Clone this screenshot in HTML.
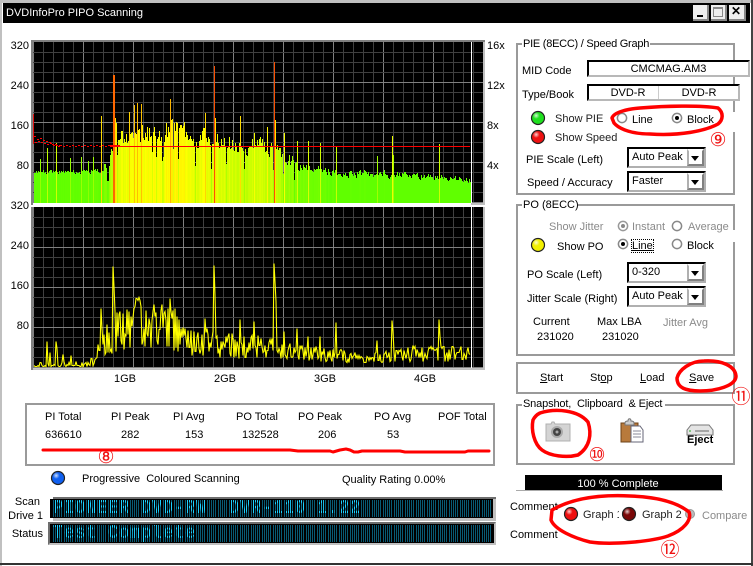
<!DOCTYPE html>
<html><head><meta charset="utf-8"><style>
html,body{margin:0;padding:0;background:#fff}
#w{position:relative;width:753px;height:566px;overflow:hidden;background:#fff;font-family:"Liberation Sans","Noto Sans CJK JP",sans-serif;font-size:11px;color:#000}
.t{position:absolute;white-space:pre;line-height:13px;transform:translateY(-5px)}
.c{transform:translate(-50%,-5px)}
.r{transform:translate(-100%,-5px)}
.g{color:#8a8a8a}
.b{position:absolute;box-sizing:border-box}
.grp{border:2px solid #9a9a9a}
.fld{position:absolute;box-sizing:border-box;background:#fff;border:2px solid;border-color:#000 #b8b8b8 #b8b8b8 #000;text-align:center;line-height:14px}
.sel{position:absolute;box-sizing:border-box;background:#fff;border:2px solid;border-color:#000 #b0b0b0 #b0b0b0 #000;line-height:17px;padding-left:3px;font-size:11px}
.sel i{position:absolute;right:0;top:0;bottom:0;width:17px;background:#fff;border:2px solid;border-color:#fff #808080 #808080 #b0b0b0;box-sizing:border-box}
.sel i:after{content:"";position:absolute;left:2px;top:5px;border:4px solid transparent;border-top:5px solid #000;border-bottom:0}
.lcdbg{position:absolute;box-sizing:border-box;background:#000}
.d{position:absolute;overflow:hidden;background:repeating-linear-gradient(90deg,#085a74 0 1px,#000 1px 2px,#085a74 2px 3px,#000 3px 4px,#085a74 4px 5px,#000 5px 6px,#085a74 6px 7px,#000 7px 8px,#085a74 8px 9px,#000 9px 11px)}
.d .x{position:absolute;left:0;top:-1px;font:bold 17px/17px "Liberation Mono",monospace;letter-spacing:.8px;color:#1cd0ff;white-space:pre;transform:scaleY(1.15);transform-origin:0 0}
.d .o{position:absolute;inset:0;background:repeating-linear-gradient(90deg,#0000 0 1px,#000 1px 2px,#0000 2px 3px,#000 3px 4px,#0000 4px 5px,#000 5px 6px,#0000 6px 7px,#000 7px 8px,#0000 8px 9px,#000 9px 11px)}
.num{position:absolute;color:#f01010;font-size:19px;line-height:20px;transform:translate(-50%,-10px);font-family:"DejaVu Sans","Noto Sans CJK JP",sans-serif}
u{text-decoration:underline}
svg{position:absolute;left:0;top:0}
</style></head><body><div id="w">
<div class="b" style="left:0;top:0;width:753px;height:3px;background:#c0c0c0"></div>
<div class="b" style="left:0;top:0;width:2px;height:566px;background:#c0c0c0"></div>
<div class="b" style="left:751px;top:0;width:2px;height:566px;background:#444"></div>
<div class="b" style="left:0;top:563px;width:753px;height:2px;background:#333"></div>
<div class="b" style="left:3px;top:3px;width:747px;height:20px;background:#000"></div>
<div class="t" style="left:6px;top:12px;color:#fff;font-size:11px">DVDInfoPro PIPO Scanning</div>
<div class="b" style="left:693px;top:5px;width:16px;height:16px;background:#eee;border-right:2px solid #888;border-bottom:2px solid #888"><div class="b" style="left:4px;top:10px;width:6px;height:2px;background:#000"></div></div>
<div class="b" style="left:711px;top:5px;width:16px;height:16px;background:#eee;border-right:2px solid #888;border-bottom:2px solid #888"><div class="b" style="left:2px;top:2px;width:10px;height:10px;border:1px solid #888;border-top-width:2px"></div></div>
<div class="b" style="left:729px;top:5px;width:17px;height:16px;background:#eee;border-right:2px solid #888;border-bottom:2px solid #888"><div class="t" style="left:2px;top:5px;font-weight:bold;font-size:12px">✕</div></div>

<svg id="ch" width="753" height="566" shape-rendering="crispEdges"></svg>

<div class="t r" style="left:29px;top:45px">320</div><div class="t r" style="left:29px;top:85px">240</div><div class="t r" style="left:29px;top:125px">160</div><div class="t r" style="left:29px;top:165px">80</div><div class="t r" style="left:29px;top:205px">320</div>
<div class="t r" style="left:29px;top:245px">240</div><div class="t r" style="left:29px;top:285px">160</div><div class="t r" style="left:29px;top:325px">80</div>
<div class="t" style="left:487px;top:45px">16x</div><div class="t" style="left:487px;top:85px">12x</div><div class="t" style="left:487px;top:125px">8x</div><div class="t" style="left:487px;top:165px">4x</div>
<div class="t c" style="left:125px;top:378px">1GB</div><div class="t c" style="left:225px;top:378px">2GB</div><div class="t c" style="left:325px;top:378px">3GB</div><div class="t c" style="left:425px;top:378px">4GB</div>

<div class="b" style="left:25px;top:403px;width:470px;height:63px;border:2px solid #9a9a9a"></div>
<div class="t" style="left:45px;top:416px">PI Total</div><div class="t" style="left:111px;top:416px">PI Peak</div><div class="t" style="left:173px;top:416px">PI Avg</div><div class="t" style="left:236px;top:416px">PO Total</div><div class="t" style="left:298px;top:416px">PO Peak</div><div class="t" style="left:374px;top:416px">PO Avg</div><div class="t" style="left:438px;top:416px">POF Total</div>
<div class="t" style="left:45px;top:434px">636610</div><div class="t" style="left:121px;top:434px">282</div><div class="t" style="left:185px;top:434px">153</div><div class="t" style="left:242px;top:434px">132528</div><div class="t" style="left:318px;top:434px">206</div><div class="t" style="left:387px;top:434px">53</div>
<div class="num" style="left:106px;top:457px">⑧</div>
<div class="t" style="left:82px;top:478px">Progressive  Coloured Scanning</div><div class="t" style="left:342px;top:479px">Quality Rating 0.00%</div>
<div class="t r" style="left:40px;top:501px">Scan</div><div class="t r" style="left:43px;top:515px">Drive 1</div><div class="t r" style="left:43px;top:533px">Status</div>

<div class="b" style="left:53px;top:497px;width:443px;height:24px;background:#c0c0c0;border-top:2px solid #6e6e6e"></div>
<div class="lcdbg" style="left:50px;top:499px;width:443px;height:19px"></div>
<div class="d" style="left:53px;top:500px;width:438px;height:17px"><div class="x">PIONEER DVD-RW  DVR-110 1.22</div><div class="o"></div></div>
<div class="lcdbg" style="left:48px;top:522px;width:448px;height:23px;border:2px solid;border-color:#6e6e6e #c0c0c0 #c0c0c0 #6e6e6e"></div>
<div class="d" style="left:53px;top:525px;width:438px;height:17px"><div class="x">Test Complete</div><div class="o"></div></div>

<div class="b grp" style="left:516px;top:43px;width:219px;height:152px"></div>
<div class="b" style="left:522px;top:38px;width:128px;height:10px;background:#fff"></div>
<div class="t" style="left:523px;top:43px;letter-spacing:-.25px">PIE (8ECC) / Speed Graph</div>
<div class="t" style="left:522px;top:70px">MID Code</div><div class="fld" style="left:587px;top:60px;width:163px;height:17px">CMCMAG.AM3</div>
<div class="t" style="left:522px;top:94px">Type/Book</div><div class="fld" style="left:587px;top:84px;width:153px;height:17px"></div><div class="t c" style="left:628px;top:92px">DVD-R</div><div class="t c" style="left:699px;top:92px">DVD-R</div>
<div class="b" style="left:658px;top:86px;width:1px;height:13px;background:#ccc"></div>
<div class="b" style="left:730px;top:112px;width:6px;height:20px;background:#fff"></div>
<div class="t" style="left:555px;top:118px;color:#222">Show PIE</div><div class="t" style="left:555px;top:137px;color:#222">Show Speed</div>
<div class="t" style="left:632px;top:119px">Line</div><div class="t" style="left:687px;top:119px">Block</div>
<div class="num" style="left:718px;top:140px">⑨</div>
<div class="t" style="left:526px;top:159px">PIE Scale (Left)</div><div class="sel" style="left:627px;top:147px;width:79px;height:21px">Auto Peak<i></i></div>
<div class="t" style="left:527px;top:182px">Speed / Accuracy</div><div class="sel" style="left:627px;top:171px;width:79px;height:21px">Faster<i></i></div>

<div class="b grp" style="left:516px;top:204px;width:219px;height:152px"></div>
<div class="b" style="left:522px;top:199px;width:56px;height:10px;background:#fff"></div>
<div class="t" style="left:523px;top:204px">PO (8ECC)</div>
<div class="b" style="left:730px;top:230px;width:6px;height:12px;background:#fff"></div>
<div class="t g" style="left:549px;top:226px">Show Jitter</div><div class="t g" style="left:632px;top:226px">Instant</div><div class="t g" style="left:688px;top:226px">Average</div>
<div class="t" style="left:557px;top:246px">Show PO</div><div class="t" style="left:632px;top:245px;outline:1px dotted #000;line-height:12px"><u>Line</u></div><div class="t" style="left:687px;top:245px">Block</div>
<div class="t" style="left:527px;top:274px">PO Scale (Left)</div><div class="sel" style="left:627px;top:262px;width:79px;height:21px">0-320<i></i></div>
<div class="t" style="left:527px;top:298px">Jitter Scale (Right)</div><div class="sel" style="left:627px;top:286px;width:79px;height:21px">Auto Peak<i></i></div>
<div class="t" style="left:533px;top:321px">Current</div><div class="t" style="left:597px;top:321px">Max LBA</div><div class="t g" style="left:663px;top:322px">Jitter Avg</div>
<div class="t" style="left:537px;top:336px">231020</div><div class="t" style="left:602px;top:336px">231020</div>

<div class="b grp" style="left:516px;top:362px;width:219px;height:32px"></div>
<div class="t" style="left:540px;top:377px"><u>S</u>tart</div><div class="t" style="left:590px;top:377px">St<u>o</u>p</div><div class="t" style="left:640px;top:377px"><u>L</u>oad</div><div class="t" style="left:689px;top:377px"><u>S</u>ave</div>
<div class="num" style="left:741px;top:397px">⑪</div>

<div class="b grp" style="left:516px;top:404px;width:219px;height:61px"></div>
<div class="b" style="left:522px;top:399px;width:143px;height:10px;background:#fff"></div>
<div class="t" style="left:523px;top:403px;letter-spacing:-.15px">Snapshot,  Clipboard  &amp; Eject</div>
<div class="t" style="left:687px;top:439px;font-weight:bold;font-size:11px">Eject</div>
<div class="num" style="left:597px;top:455px">⑩</div>

<div class="b" style="left:516px;top:490px;width:207px;height:1px;background:#aaa"></div>
<div class="b" style="left:525px;top:475px;width:197px;height:15px;background:#000"></div>
<div class="t c" style="left:618px;top:483px;color:#fff;font-size:11px">100 % Complete</div>
<div class="t" style="left:510px;top:506px">Comment</div><div class="t" style="left:510px;top:534px">Comment</div>
<div class="b" style="left:583px;top:505px;width:36px;height:18px;overflow:hidden"><div class="t" style="left:0;top:9px;color:#222">Graph 1</div></div>
<div class="t" style="left:642px;top:514px;color:#222">Graph 2</div>
<div class="t g" style="left:702px;top:515px">Compare</div>
<div class="num" style="left:670px;top:550px">⑫</div>

<svg id="ov" width="753" height="566" viewBox="0 0 753 566">
<defs><radialGradient id="sh" cx=".35" cy=".3" r=".8"><stop offset="0" stop-color="#fff" stop-opacity=".8"/><stop offset=".35" stop-color="#fff" stop-opacity="0"/></radialGradient></defs>
<g stroke="#222" stroke-width="1.2">
<circle cx="538" cy="118" r="6.5" fill="#1fe01f"/><circle cx="538" cy="137" r="6.5" fill="#ee1111"/>
<circle cx="538" cy="245" r="6.5" fill="#f2f000"/><circle cx="58" cy="478" r="6.5" fill="#1060f0"/>
<circle cx="571" cy="514" r="6.5" fill="#ee0f0f"/><circle cx="629" cy="514" r="6.5" fill="#7a0808"/>
</g>
<g fill="url(#sh)"><circle cx="538" cy="118" r="6"/><circle cx="538" cy="137" r="6"/><circle cx="538" cy="245" r="6"/><circle cx="58" cy="478" r="6"/><circle cx="571" cy="514" r="6"/><circle cx="629" cy="514" r="6"/></g>
<circle cx="690" cy="514" r="4.5" fill="#bbb" stroke="#999"/>
<g fill="#fff" stroke-width="1.5">
<circle cx="622" cy="118" r="4.6" stroke="#888"/><circle cx="677" cy="118" r="4.6" stroke="#888"/>
<circle cx="623" cy="226" r="4.6" stroke="#999"/><circle cx="677" cy="226" r="4.6" stroke="#888"/>
<circle cx="623" cy="244" r="4.6" stroke="#888"/><circle cx="677" cy="244" r="4.6" stroke="#888"/>
</g>
<circle cx="677" cy="118" r="2" fill="#000"/><circle cx="623" cy="226" r="2" fill="#888"/><circle cx="623" cy="244" r="2" fill="#000"/>
<!-- camera -->
<path d="M546 424h5l1-2h2l1 2h15v17h-24z" fill="#d4d4d4" stroke="#b0b0b0"/><circle cx="557" cy="432" r="6" fill="#aaa"/><circle cx="557" cy="432" r="4" fill="#444"/><circle cx="557" cy="432" r="1.5" fill="#aaa"/>
<!-- clipboard -->
<path d="M621 423h17v19h-17z" fill="#b87a3c" stroke="#6e4318"/><path d="M625 423c0-2 2-2 3-2 0-3 3-3 3 0 1 0 3 0 3 2v2h-9z" fill="#ccc" stroke="#777"/><path d="M631 426h9l3 4v12h-12z" fill="#fff" stroke="#667"/><path d="M633 431h8M633 434h8M633 437h8" stroke="#889" fill="none"/>
<!-- eject drive -->
<path d="M687 430l4-5h18l4 5v5h-26z" fill="#e4e4e4" stroke="#777"/><path d="M695 431h14" stroke="#666"/><path d="M689 431h2" stroke="#2a2"/>
<!-- hand-drawn red -->
<g fill="none" stroke="#f00" stroke-width="3.5" stroke-linejoin="round" stroke-linecap="round">
<path stroke-width="3" d="M43 450H290L298 451H330L333 452L340 450L346 449L350 450L354 452H358L362 451H400L405 452H465L468 451H489" />
<path d="M612 118C614 112 628 109 640 108C665 106 700 105 718 108C724 113 723 120 718 124C705 131 680 136 650 134C634 134 620 130 614 123Z"/>
<path d="M677 378C679 370 690 361 704 361C722 360 735 366 736 376C736 386 716 391 700 391C686 391 677 388 677 378Z"/>
<path d="M540 413C556 408 578 410 588 422C592 434 590 447 578 455C566 458 550 456 542 450C534 444 531 430 533 420C535 416 538 414 540 413Z"/>
<path d="M552 510C566 502 590 494 630 496C660 497 678 503 689 512C692 520 684 530 668 536C650 542 610 545 590 542C574 538 555 530 551 520Z"/>
</g>
</svg>
<script>
(function(){
var s=20240607;function R(){s=(s*1664525+1013904223)>>>0;return s/4294967296}
function env(p,x){for(var i=1;i<p.length;i++)if(x<=p[i][0]){var a=p[i-1],b=p[i];return a[1]+(b[1]-a[1])*(x-a[0])/(b[0]-a[0])}return p[p.length-1][1]}
var o=[];
function L(x,y,w,h,c){o.push('<rect x="'+x+'" y="'+y+'" width="'+w+'" height="'+h+'" fill="'+c+'"/>')}
function frame(top,bot){
 L(31,top-2,454,bot-top+4,'#c0c0c0');L(31,top-2,454,2,'#808080');L(31,top-2,2,bot-top+4,'#808080');
 L(33,top,450,bot-top,'#000');
 for(var x=33;x<483;x+=10){L(x,top,1,bot-top,(x-83)%50==0?'#808080':'#404040')}
 for(var y=top+10;y<bot;y+=10){L(33,y,450,1,(y-top-40)%40==0?'#808080':'#404040')}
 L(471,top,1,bot-top,'#fff');
}
frame(42,203);frame(207,368);
L(33,203,438,2,'#fff');L(31,205,454,2,'#fff');L(33,368,438,1,'#c8c8c8');
function col(h){var r,g;if(h<30){r=0x60;g=255}else if(h<72){r=0x60+(h-30)/42*159;g=255}else if(h<105){r=255;g=255-(h-72)/33*75}else{r=255;g=Math.max(80,180-(h-105)/30*100)}return 'rgb('+(r|0)+','+(g|0)+',0)'}
var ep=[[34,29],[100,31],[106,42],[113,58],[125,72],[170,76],[215,66],[240,62],[275,58],[298,38],[340,30],[400,29],[440,27],[470,24]];
var sp={40:44,47:55,56:60,70:45,81:46,88:42,93:46,101:87,113:128,114:128,115:85,116:80,129:91,134:98,137:100,141:99,170:104,205:90,214:137,215:85,240:87,254:70,267:76,274:141,275:83,284:70,297:62,308:62,320:60,336:57,377:47,392:67,393:48,439:59};
var prev=29;
for(var x=34;x<471;x++){var e=env(ep,x),lo=x<100?.92:(x<300?.72:.8),h=e*(lo+R()*(1.15-lo));h=.35*prev+.65*h;prev=h;if(x>105&&x<300&&R()<.14)h*=.65;var ch=(h+e)/2;if(sp[x]){h=sp[x];ch=h}h=Math.round(h);L(x,203-h,1,h,col(ch))}
// speed line
var y=[136,142,139,141,138,142,140,143,141,144,142,143,144,145,144,145,146,145];
for(var i=0;i<y.length;i++){L(34+i*1.5|0,y[i],2,1,'#f00')}
for(var x=60;x<110;x+=3){L(x,145+(x%2),2,1,'#f00')}
L(33,114,1,30,'#e01010');L(110,146,360,1,'#f00');L(110,145,10,1,'#f00');
// PO line
var pp=[[34,4],[60,5],[95,8],[100,26],[113,42],[135,56],[170,52],[190,38],[215,28],[270,24],[300,18],[350,13],[380,11],[420,18],[470,16]];
var ps={47:25,50:14,56:25,57:18,63:12,71:11,101:58,102:38,113:100,114:80,115:55,129:55,134:58,137:68,141:60,155:50,165:55,170:68,171:55,175:58,205:48,214:101,215:72,240:47,254:45,274:103,275:85,276:65,284:35,297:38,308:30,320:30,336:44,377:26,392:46,393:35,439:47,440:30};
var a=[];
for(var x=34;x<471;x++){var e=env(pp,x),v=e*(x<95?R()*1.2*(R()<.5?.2:1):(.3+R()*.95));if(ps[x])v=ps[x];a.push(x+','+(Math.round(366-v)+.5))}
o.push('<polyline points="'+a.join(' ')+'" fill="none" stroke="#ff0" stroke-width="1.1" shape-rendering="auto"/>');
document.getElementById('ch').innerHTML=o.join('');
})();
</script>
</div></body></html>
